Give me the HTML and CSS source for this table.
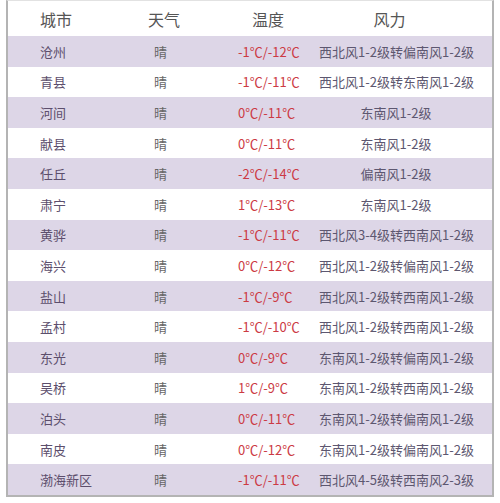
FILE: index.html
```html
<!DOCTYPE html>
<html lang="zh">
<head>
<meta charset="utf-8">
<link rel="stylesheet" href="styles.css">
</head>
<body>
<div class="frame">
  <div class="row head">
    <div class="c city">城市</div><div class="c wx">天气</div><div class="c temp-h">温度</div><div class="c wind">风力</div>
  </div>
  <div class="row odd"><div class="c city">沧州</div><div class="c wx">晴</div><div class="c temp">-1℃/-12℃</div><div class="c wind">西北风1-2级转偏南风1-2级</div></div>
  <div class="row"><div class="c city">青县</div><div class="c wx">晴</div><div class="c temp">-1℃/-11℃</div><div class="c wind">西北风1-2级转东南风1-2级</div></div>
  <div class="row odd"><div class="c city">河间</div><div class="c wx">晴</div><div class="c temp">0℃/-11℃</div><div class="c wind">东南风1-2级</div></div>
  <div class="row"><div class="c city">献县</div><div class="c wx">晴</div><div class="c temp">0℃/-11℃</div><div class="c wind">东南风1-2级</div></div>
  <div class="row odd"><div class="c city">任丘</div><div class="c wx">晴</div><div class="c temp">-2℃/-14℃</div><div class="c wind">偏南风1-2级</div></div>
  <div class="row"><div class="c city">肃宁</div><div class="c wx">晴</div><div class="c temp">1℃/-13℃</div><div class="c wind">东南风1-2级</div></div>
  <div class="row odd"><div class="c city">黄骅</div><div class="c wx">晴</div><div class="c temp">-1℃/-11℃</div><div class="c wind">西北风3-4级转西南风1-2级</div></div>
  <div class="row"><div class="c city">海兴</div><div class="c wx">晴</div><div class="c temp">0℃/-12℃</div><div class="c wind">西北风1-2级转偏南风1-2级</div></div>
  <div class="row odd"><div class="c city">盐山</div><div class="c wx">晴</div><div class="c temp">-1℃/-9℃</div><div class="c wind">西北风1-2级转西南风1-2级</div></div>
  <div class="row"><div class="c city">孟村</div><div class="c wx">晴</div><div class="c temp">-1℃/-10℃</div><div class="c wind">西北风1-2级转西南风1-2级</div></div>
  <div class="row odd"><div class="c city">东光</div><div class="c wx">晴</div><div class="c temp">0℃/-9℃</div><div class="c wind">东南风1-2级转偏南风1-2级</div></div>
  <div class="row"><div class="c city">吴桥</div><div class="c wx">晴</div><div class="c temp">1℃/-9℃</div><div class="c wind">东南风1-2级转西南风1-2级</div></div>
  <div class="row odd"><div class="c city">泊头</div><div class="c wx">晴</div><div class="c temp">0℃/-11℃</div><div class="c wind">东南风1-2级转偏南风1-2级</div></div>
  <div class="row"><div class="c city">南皮</div><div class="c wx">晴</div><div class="c temp">0℃/-12℃</div><div class="c wind">东南风1-2级转偏南风1-2级</div></div>
  <div class="row odd"><div class="c city">渤海新区</div><div class="c wx">晴</div><div class="c temp">-1℃/-11℃</div><div class="c wind">西北风4-5级转西南风2-3级</div></div>
</div>
</body>
</html>
```
FILE: styles.css
```css
html, body {
  margin: 0;
  padding: 0;
  background: #ffffff;
}
body {
  font-family: "Noto Sans CJK SC", "Noto Sans", sans-serif;
  font-size: 13px;
  color: #5e5868;
}
.frame {
  margin-left: 6px;
  width: 484px;
  border-top: 1px solid #e2e2e2;
  border-left: 2px solid #b4b4b4;
  border-right: 2px solid #b4b4b4;
  border-bottom: 2px solid #b4b4b4;
}
.row {
  display: grid;
  grid-template-columns: 103px 104px 104px 173px;
  height: 30.6px;
  align-items: center;
  white-space: nowrap;
}
.row.head {
  height: 35px;
  font-size: 16px;
  color: #555555;
}
.row.odd {
  background: #ddd6e7;
}
.c.city {
  padding-left: 32px;
  color: #5c4e6c;
}
.head .c.city { color: #555555; }
.c.wx {
  padding-left: 43px;
  color: #666666;
}
.head .c.wx { padding-left: 37px; color: #555555; }
.c.temp {
  padding-left: 23px;
  color: #cc3a44;
}
.c.temp-h {
  padding-left: 37px;
}
.c.wind {
  text-align: center;
  padding-right: 19px;
  color: #5d5770;
}
.head .c.wind { color: #555555; padding-right: 32px; }
```
